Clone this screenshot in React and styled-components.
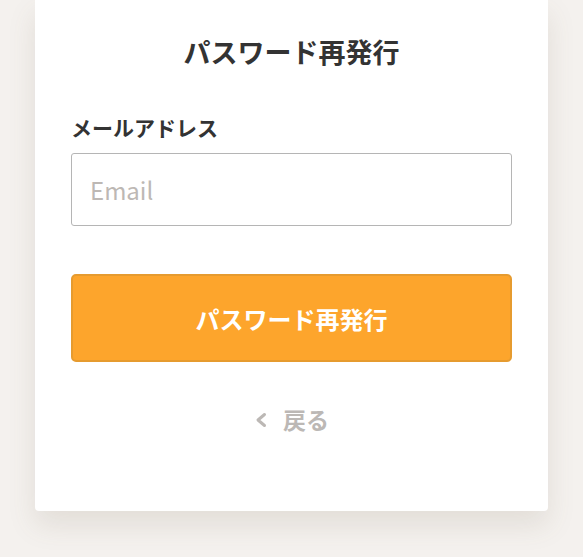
import React from 'react';
import styled, { createGlobalStyle } from 'styled-components';

const GlobalStyle = createGlobalStyle`
  html, body {
    margin: 0;
    padding: 0;
    background: #f4f1ee;
  }
  body {
    font-family: "Noto Sans CJK JP", "Noto Sans", sans-serif;
    color: #333;
  }
`;

const Page = styled.div`
  min-height: 557px;
  padding: 0 35px;
`;

const Card = styled.div`
  width: 513px;
  box-sizing: border-box;
  background: #fff;
  border-radius: 0 0 4px 4px;
  padding: 34px 36px 76px;
  box-shadow: 0 14px 28px rgba(110, 90, 70, 0.13);
`;

const Title = styled.h1`
  margin: 0;
  font-size: 27px;
  line-height: 36px;
  font-weight: 700;
  text-align: center;
  color: #333;
`;

const Label = styled.label`
  display: block;
  margin-top: 43px;
  font-size: 21px;
  line-height: 28px;
  font-weight: 700;
  color: #333;
`;

const Input = styled.input`
  display: block;
  width: 100%;
  height: 73px;
  box-sizing: border-box;
  margin-top: 12px;
  padding: 0 18px;
  border: 1px solid #b5b5b5;
  border-radius: 3px;
  font-family: "Noto Sans CJK JP", sans-serif;
  font-size: 24px;
  color: #333;
  outline: none;
  &::placeholder {
    color: #bdb8b4;
  }
`;

const SubmitButton = styled.button`
  display: block;
  width: 100%;
  height: 88px;
  margin-top: 48px;
  box-sizing: border-box;
  border: 2px solid #e69b2f;
  border-radius: 5px;
  background: #fda52c;
  color: #fff;
  font-family: "Noto Sans CJK JP", sans-serif;
  font-size: 24px;
  font-weight: 700;
  cursor: pointer;
`;

const BackLink = styled.a`
  display: flex;
  align-items: center;
  justify-content: center;
  gap: 15px;
  margin-top: 42px;
  font-size: 23px;
  line-height: 31px;
  font-weight: 700;
  color: #bcb8b5;
  text-decoration: none;
`;

const Chevron = () => (
  <svg width="14" height="16" viewBox="0 0 14 16" fill="none">
    <path d="M10.5 2.5 L4 8 L10.5 13.5" stroke="#bcb8b5" strokeWidth="3" strokeLinecap="round" strokeLinejoin="round" />
  </svg>
);

export default function App() {
  return (
    <Page>
      <GlobalStyle />
      <Card>
        <Title>パスワード再発行</Title>
        <Label htmlFor="email">メールアドレス</Label>
        <Input id="email" type="email" placeholder="Email" />
        <SubmitButton type="button">パスワード再発行</SubmitButton>
        <BackLink href="#">
          <Chevron />
          戻る
        </BackLink>
      </Card>
    </Page>
  );
}
